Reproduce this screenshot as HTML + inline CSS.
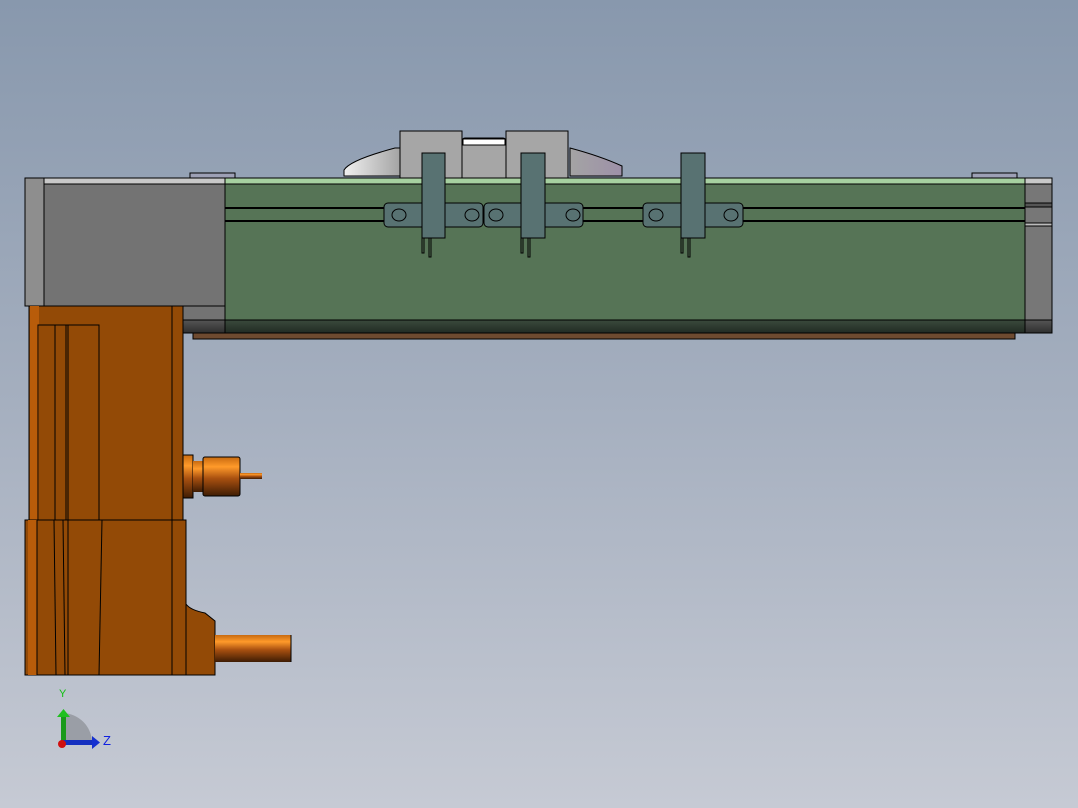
<!DOCTYPE html>
<html><head><meta charset="utf-8"><style>
html,body{margin:0;padding:0;width:1078px;height:808px;overflow:hidden;}
body{background:linear-gradient(#8898ad 0%,#a5afbf 50%,#c6cad4 100%);}
svg{position:absolute;left:0;top:0;}
</style></head><body>
<svg width="1078" height="808" viewBox="0 0 1078 808" xmlns="http://www.w3.org/2000/svg">
<defs>
<linearGradient id="cyl" x1="0" y1="0" x2="0" y2="1">
<stop offset="0" stop-color="#c86a10"/><stop offset="0.25" stop-color="#ff9a2a"/><stop offset="0.55" stop-color="#a85010"/><stop offset="1" stop-color="#3e1c04"/>
</linearGradient>
<linearGradient id="band" x1="0" y1="0" x2="0" y2="1">
<stop offset="0" stop-color="#3a4a3c"/><stop offset="1" stop-color="#222b24"/>
</linearGradient>
<linearGradient id="gband" x1="0" y1="0" x2="0" y2="1">
<stop offset="0" stop-color="#555"/><stop offset="1" stop-color="#2e2e2e"/>
</linearGradient>
<linearGradient id="wedge" x1="0" y1="0" x2="1" y2="0">
<stop offset="0" stop-color="#f0f0f0"/><stop offset="1" stop-color="#a4a4a4"/>
</linearGradient>
<linearGradient id="wedge2" x1="0" y1="0" x2="1" y2="0">
<stop offset="0" stop-color="#a4a4a4"/><stop offset="1" stop-color="#9d90a8"/>
</linearGradient>
</defs>
<g stroke="#000" stroke-width="1">
<!-- top cover -->
<path d="M344 170 Q350 160 395 148 L400 148 L400 176 L344 176 Z" fill="url(#wedge)"/>
<path d="M570 148 Q600 156 622 166 L622 176 L570 176 Z" fill="url(#wedge2)"/>
<rect x="400" y="131" width="62" height="47" fill="#a6a6a6"/>
<rect x="506" y="131" width="62" height="47" fill="#a6a6a6"/>
<rect x="462" y="138" width="44" height="43" rx="3" fill="#a6a6a6"/>
<rect x="463" y="139" width="42" height="6" fill="#fff"/>
<rect x="190" y="173" width="45" height="5" fill="#9da0b5"/>
<rect x="972" y="173" width="45" height="5" fill="#9da0b5"/>
<!-- gray end block -->
<rect x="25" y="178" width="200" height="128" fill="#737373"/>
<rect x="25" y="178" width="19" height="128" fill="#8e8e8e"/>
<rect x="44" y="178" width="181" height="6" fill="#c8c8c8"/>
<rect x="171" y="306" width="54" height="27" fill="#737373"/>
<rect x="171" y="320" width="54" height="13" fill="url(#gband)"/>
<!-- green rail -->
<rect x="225" y="178" width="800" height="155" fill="#567456"/>
<rect x="225" y="178" width="800" height="6" fill="#a6d0a0"/>
<rect x="225" y="320" width="800" height="13" fill="url(#band)"/>
<line x1="225" y1="208" x2="1025" y2="208" stroke-width="2"/>
<line x1="225" y1="221" x2="1025" y2="221" stroke-width="2"/>
<rect x="193" y="333" width="822" height="6" fill="#6e4a30"/>
<!-- right cap -->
<rect x="1025" y="178" width="27" height="155" fill="#777"/>
<rect x="1025" y="178" width="27" height="6" fill="#c8c8c8"/>
<rect x="1025" y="203" width="27" height="4" fill="#555"/>
<rect x="1025" y="223" width="27" height="3" fill="#bbb"/>
<rect x="1025" y="320" width="27" height="13" fill="url(#gband)"/>
<!-- carriages -->
<g fill="#587272">
<rect x="384" y="203" width="99" height="24" rx="4"/>
<rect x="484" y="203" width="99" height="24" rx="4"/>
<rect x="643" y="203" width="100" height="24" rx="4"/>
<ellipse cx="399" cy="215" rx="7" ry="6"/><ellipse cx="472" cy="215" rx="7" ry="6"/>
<ellipse cx="496" cy="215" rx="7" ry="6"/><ellipse cx="573" cy="215" rx="7" ry="6"/>
<ellipse cx="656" cy="215" rx="7" ry="6"/><ellipse cx="731" cy="215" rx="7" ry="6"/>
<rect x="422" y="153" width="23" height="85"/>
<rect x="521" y="153" width="24" height="85"/>
<rect x="681" y="153" width="24" height="85"/>
</g>
<g fill="#567456">
<rect x="422" y="238" width="2" height="15"/><rect x="429" y="238" width="2" height="19"/>
<rect x="521" y="238" width="2" height="15"/><rect x="528" y="238" width="2" height="19"/>
<rect x="681" y="238" width="2" height="15"/><rect x="688" y="238" width="2" height="19"/>
</g>
<!-- motor -->
<rect x="29" y="306" width="154" height="214" fill="#934a06"/>
<rect x="30" y="306" width="9" height="214" fill="#b85c0a" stroke="none"/>
<rect x="38" y="325" width="61" height="195" fill="none"/>
<line x1="55" y1="325" x2="55" y2="520"/><line x1="66" y1="325" x2="66" y2="520"/><line x1="68" y1="325" x2="68" y2="520"/>
<line x1="172" y1="306" x2="172" y2="520"/>
<path d="M183 602 L186 604 Q190 610 205 613 L215 621 L215 675 L186 675 Z" fill="#934a06"/>
<rect x="25" y="520" width="161" height="155" fill="#934a06"/>
<rect x="28" y="520" width="9" height="155" fill="#b85c0a" stroke="none"/>
<line x1="37" y1="520" x2="37" y2="675"/><line x1="54" y1="520" x2="56" y2="675"/><line x1="63" y1="520" x2="65" y2="675"/><line x1="68" y1="520" x2="68" y2="675"/><line x1="102" y1="520" x2="99" y2="675"/><line x1="172" y1="520" x2="172" y2="675"/>
<!-- shafts -->
<rect x="183" y="455" width="10" height="43" fill="url(#cyl)"/>
<rect x="193" y="461" width="10" height="31" fill="url(#cyl)" stroke="none"/>
<rect x="203" y="457" width="37" height="39" rx="2" fill="url(#cyl)"/>
<rect x="240" y="473" width="22" height="6" fill="url(#cyl)" stroke="none"/>
<rect x="215" y="635" width="76" height="27" fill="url(#cyl)" stroke="none"/>
<line x1="291" y1="635" x2="291" y2="662"/>
</g>
<!-- triad -->
<path d="M63 713 A30 30 0 0 1 92 742 L63 742 Z" fill="#9a9ea6"/>
<rect x="61" y="716" width="5" height="27" fill="#1a9a1a"/>
<path d="M57 717 L63.5 709 L70 717 Z" fill="#1fc01f"/>
<rect x="63" y="740" width="30" height="5" fill="#1530c0"/>
<path d="M92 736 L100 742.5 L92 749 Z" fill="#1530d0"/>
<circle cx="62" cy="744" r="4" fill="#d01010"/>
<text x="59" y="697" font-family="Liberation Sans, sans-serif" font-size="11" fill="#10c010">Y</text>
<text x="103" y="745" font-family="Liberation Sans, sans-serif" font-size="13" fill="#1020e0">Z</text>
</svg>
</body></html>
